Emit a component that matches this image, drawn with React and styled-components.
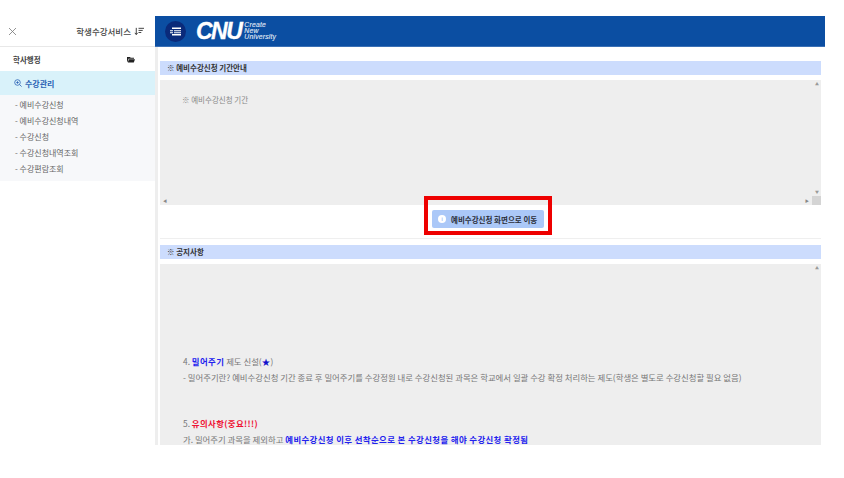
import React from "react";
import styled, { createGlobalStyle } from "styled-components";

const Global = createGlobalStyle`
  html, body { margin: 0; padding: 0; background: #fff; }
  body { font-family: "Noto Sans CJK KR", "Noto Sans", sans-serif; }
`;
const Page = styled.div`
  position: relative;
  width: 825px;
  height: 429px;
  margin-top: 16px;
  display: flex;
  overflow: hidden;
`;
const Sidebar = styled.aside`
  width: 155px;
  flex: none;
  display: flex;
  flex-direction: column;
`;
const SideHead = styled.div`
  height: 30px;
  border-bottom: 1px solid #e8e8e8;
  display: flex;
  align-items: center;
  justify-content: space-between;
  padding: 0 11px 0 8px;
`;
const SideTitle = styled.div`
  display: flex;
  align-items: center;
  gap: 3px;
  font-size: 8.5px;
  color: #444;
  font-weight: 500;
`;
const GroupRow = styled.div`
  height: 24px;
  display: flex;
  align-items: center;
  justify-content: space-between;
  padding: 0 20px 0 13px;
  font-size: 7.5px;
  font-weight: 700;
  color: #444;
`;
const ActiveRow = styled.div`
  height: 24px;
  background: #d9f2fa;
  display: flex;
  align-items: center;
  gap: 3px;
  padding-left: 14px;
  font-size: 8px;
  font-weight: 700;
  color: #2b62b5;
`;
const SubList = styled.ul`
  list-style: none;
  margin: 0;
  padding: 2px 0 4px 15px;
  background: #f7f8fa;
`;
const SubItem = styled.li`
  height: 16px;
  line-height: 16px;
  font-size: 8px;
  color: #666;
`;
const Main = styled.main`
  flex: 1;
  min-width: 0;
  display: flex;
  flex-direction: column;
`;
const TopBar = styled.header`
  height: 30px;
  flex: none;
  background: #0b4ea2;
  border-bottom: 1px solid #3a70b5;
  display: flex;
  align-items: center;
  padding-left: 10px;
  gap: 10px;
`;
const MenuButton = styled.button`
  width: 21px;
  height: 21px;
  border: 0;
  padding: 0;
  border-radius: 50%;
  background: #0a2a7a;
  display: flex;
  align-items: center;
  justify-content: center;
`;
const Logo = styled.div`
  display: flex;
  align-items: center;
  gap: 3px;
  color: #fff;
`;
const LogoMark = styled.span`
  font-family: "Liberation Sans", sans-serif;
  font-weight: 700;
  font-style: italic;
  font-size: 23px;
  line-height: 30px;
  letter-spacing: -1.5px;
  -webkit-text-stroke: 0.3px #fff;
`;
const LogoTag = styled.span`
  font-family: "Liberation Sans", sans-serif;
  font-style: italic;
  font-size: 6.8px;
  line-height: 6px;
  color: #e4ecf7;
  letter-spacing: 0.2px;
  -webkit-text-stroke: 0.1px #e4ecf7;
`;
const Content = styled.div`
  flex: 1;
  min-height: 0;
  border-left: 3px solid #eeeeee;
  padding: 14px 4px 0 2px;
  display: flex;
  flex-direction: column;
`;
const SectionTitle = styled.h2`
  margin: 0 0 5px;
  height: 14px;
  flex: none;
  background: #ccdcfd;
  padding-left: 7px;
  font-size: 7.5px;
  line-height: 14px;
  font-weight: 700;
  color: #333;
`;
const InfoBox = styled.div`
  position: relative;
  height: 125px;
  flex: none;
  background: #eeeeee;
  padding: 14px 22px;
  box-sizing: border-box;
  font-size: 7.5px;
  line-height: 12px;
  color: #888;
`;
const ScrollTrack = styled.div`
  position: absolute;
  top: 0;
  right: 0;
  bottom: ${p => (p.$corner ? "9px" : "0")};
  width: 8px;
  display: flex;
  flex-direction: column;
  justify-content: space-between;
  align-items: center;
  padding: 2px 0;
  box-sizing: border-box;
  font-size: 4px;
  line-height: 4px;
  color: #999;
`;
const HScroll = styled.div`
  position: absolute;
  left: 0;
  right: 0;
  bottom: 0;
  height: 9px;
  display: flex;
  justify-content: space-between;
  align-items: center;
  padding: 0 12px 0 3px;
  font-size: 4px;
  color: #888;
`;
const Corner = styled.div`
  position: absolute;
  right: 0;
  bottom: 0;
  width: 9px;
  height: 9px;
  background: #d4d4d4;
`;
const ActionRow = styled.div`
  height: 28px;
  flex: none;
  margin-bottom: 6px;
  border-bottom: 1px solid #efefef;
  display: flex;
  align-items: flex-start;
  justify-content: center;
  padding: 5px 5px 0 0;
  box-sizing: content-box;
`;
const ActionButton = styled.button`
  width: 112px;
  height: 18px;
  border: 0;
  border-radius: 2px;
  background: #abc8f8;
  display: flex;
  align-items: center;
  gap: 5px;
  padding: 0 0 0 6px;
  font-family: inherit;
  font-size: 7.5px;
  font-weight: 700;
  color: #2b2f3a;
  white-space: nowrap;
`;
const InfoDot = styled.span`
  width: 8px;
  height: 8px;
  border-radius: 50%;
  background: #fff;
  color: #abc8f8;
  font-size: 6px;
  line-height: 8px;
  text-align: center;
  font-family: "Liberation Sans", sans-serif;
`;
const Highlight = styled.div`
  position: absolute;
  left: 424px;
  top: 180px;
  width: 128px;
  height: 39px;
  border: 4px solid #ee0000;
  box-sizing: border-box;
  pointer-events: none;
`;
const NoticeBox = styled.div`
  position: relative;
  flex: 1;
  min-height: 0;
  background: #eeeeee;
  padding: 91px 23px 0;
  font-size: 8.4px;
  color: #777;
  white-space: nowrap;
`;
const NoticeLine = styled.p`
  margin: 0 0 ${p => p.$gap || 4}px;
  height: 12px;
  line-height: 12px;
`;
const Strong = styled.b`
  color: ${p => p.$c || "#2222ee"};
  letter-spacing: 0.4px;
`;

const SortIcon = () => (
  <svg width="10" height="9" viewBox="0 0 11 9" fill="none" stroke="#333" strokeWidth="1">
    <path d="M2.5 0.5v7M1 6l1.5 2L4 6M5 1h6M5 3.3h4.6M5 5.6h3" />
  </svg>
);
const CloseIcon = () => (
  <svg width="9" height="9" viewBox="0 0 9 9" stroke="#777" strokeWidth="0.8">
    <path d="M1 1l7 7M8 1l-7 7" />
  </svg>
);
const FolderIcon = () => (
  <svg width="8" height="7" viewBox="0 0 8 7" fill="#222">
    <path d="M0 1h3l.7.8H7v1H1.4L.4 6H0zM1.8 3.2H8L6.8 6.4H.8z" />
  </svg>
);
const SearchIcon = () => (
  <svg width="8" height="8" viewBox="0 0 8 8" fill="none" stroke="#2b62b5" strokeWidth="0.8">
    <circle cx="3.5" cy="3.5" r="2.8" />
    <path d="M5.6 5.6L7.6 7.6M2.2 3.5h2.6M3.5 2.2v2.6" />
  </svg>
);
const MenuIcon = () => (
  <svg width="11" height="9" viewBox="0 0 11 9" fill="#fff">
    <path d="M2 0.5h9v1.4H2zM0 3.3h3v1H0zM4 3.3h7v1H4zM0 5.2h3v1H0zM4 5.2h7v1H4zM2 7h9v1.4H2z" />
  </svg>
);

export default function App() {
  return (
    <>
      <Global />
      <Page>
        <Sidebar>
          <SideHead>
            <CloseIcon />
            <SideTitle>학생수강서비스<SortIcon /></SideTitle>
          </SideHead>
          <GroupRow>학사행정 <FolderIcon /></GroupRow>
          <ActiveRow><SearchIcon /> 수강관리</ActiveRow>
          <SubList>
            <SubItem>- 예비수강신청</SubItem>
            <SubItem>- 예비수강신청내역</SubItem>
            <SubItem>- 수강신청</SubItem>
            <SubItem>- 수강신청내역조회</SubItem>
            <SubItem>- 수강편람조회</SubItem>
          </SubList>
        </Sidebar>
        <Main>
          <TopBar>
            <MenuButton aria-label="menu"><MenuIcon /></MenuButton>
            <Logo>
              <LogoMark>CNU</LogoMark>
              <LogoTag>Create<br />New<br />University</LogoTag>
            </Logo>
          </TopBar>
          <Content>
            <SectionTitle>※ 예비수강신청 기간안내</SectionTitle>
            <InfoBox>
              ※ 예비수강신청 기간
              <ScrollTrack $corner><span>▲</span><span>▼</span></ScrollTrack>
              <HScroll><span>◀</span><span>▶</span></HScroll>
              <Corner />
            </InfoBox>
            <ActionRow>
              <ActionButton><InfoDot>i</InfoDot>예비수강신청 화면으로 이동</ActionButton>
            </ActionRow>
            <SectionTitle>※ 공지사항</SectionTitle>
            <NoticeBox>
              <NoticeLine>4. <Strong>밀어주기</Strong> 제도 신설(<Strong $c="#1111cc">★</Strong>)</NoticeLine>
              <NoticeLine $gap={34}>- 밀어주기란? 예비수강신청 기간 종료 후 밀어주기를 수강정원 내로 수강신청된 과목은 학교에서 일괄 수강 확정 처리하는 제도(학생은 별도로 수강신청할 필요 없음)</NoticeLine>
              <NoticeLine>5. <Strong $c="#ee1133">유의사항(중요!!!)</Strong></NoticeLine>
              <NoticeLine>가. 밀어주기 과목을 제외하고 <Strong>예비수강신청 이후 선착순으로 본 수강신청을 해야 수강신청 확정됨</Strong></NoticeLine>
              <ScrollTrack><span>▲</span></ScrollTrack>
            </NoticeBox>
          </Content>
        </Main>
        <Highlight />
      </Page>
    </>
  );
}
